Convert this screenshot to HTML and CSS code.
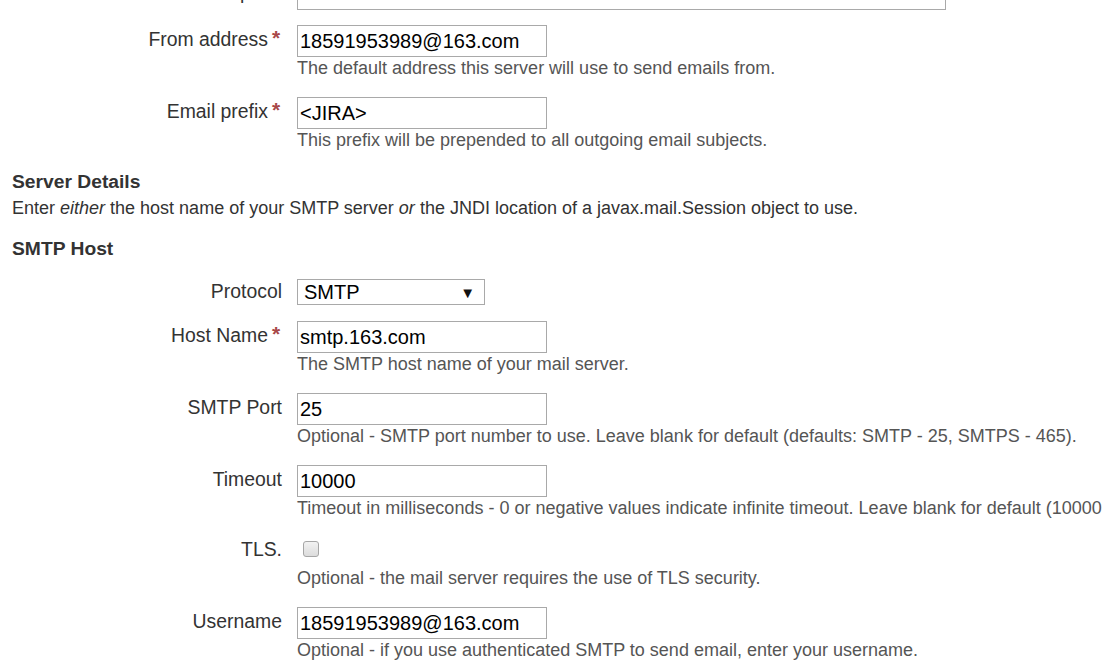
FILE: index.html
```html
<!DOCTYPE html>
<html>
<head>
<meta charset="utf-8">
<link rel="stylesheet" href="styles.css">
</head>
<body>
<div class="page">
  <div class="field tight">
    <label class="lbl">Description</label>
    <div class="ctrl"><input class="text long" type="text" value=""></div>
  </div>

  <div class="field">
    <label class="lbl">From address<span class="req">*</span></label>
    <div class="ctrl">
      <input class="text" type="text" value="18591953989@163.com">
      <div class="desc">The default address this server will use to send emails from.</div>
    </div>
  </div>

  <div class="field">
    <label class="lbl">Email prefix<span class="req">*</span></label>
    <div class="ctrl">
      <input class="text" type="text" value="<JIRA>">
      <div class="desc">This prefix will be prepended to all outgoing email subjects.</div>
    </div>
  </div>

  <h3 class="section">Server Details</h3>
  <p class="intro">Enter <em>either</em> the host name of your SMTP server <em>or</em> the JNDI location of a javax.mail.Session object to use.</p>

  <h3 class="section sub">SMTP Host</h3>

  <div class="field select-row">
    <label class="lbl">Protocol</label>
    <div class="ctrl">
      <div class="select"><span>SMTP</span><span class="arrow">&#9660;</span></div>
    </div>
  </div>

  <div class="field">
    <label class="lbl">Host Name<span class="req">*</span></label>
    <div class="ctrl">
      <input class="text" type="text" value="smtp.163.com">
      <div class="desc">The SMTP host name of your mail server.</div>
    </div>
  </div>

  <div class="field">
    <label class="lbl">SMTP Port</label>
    <div class="ctrl">
      <input class="text" type="text" value="25">
      <div class="desc">Optional - SMTP port number to use. Leave blank for default (defaults: SMTP - 25, SMTPS - 465).</div>
    </div>
  </div>

  <div class="field">
    <label class="lbl">Timeout</label>
    <div class="ctrl">
      <input class="text" type="text" value="10000">
      <div class="desc">Timeout in milliseconds - 0 or negative values indicate infinite timeout. Leave blank for default (10000</div>
    </div>
  </div>

  <div class="field check-row">
    <label class="lbl">TLS.</label>
    <div class="ctrl">
      <div class="checkline"><span class="checkbox"></span></div>
      <div class="desc">Optional - the mail server requires the use of TLS security.</div>
    </div>
  </div>

  <div class="field">
    <label class="lbl">Username</label>
    <div class="ctrl">
      <input class="text" type="text" value="18591953989@163.com">
      <div class="desc">Optional - if you use authenticated SMTP to send email, enter your username.</div>
    </div>
  </div>
</div>
</body>
</html>
```

FILE: styles.css
```css
html, body {
  margin: 0;
  padding: 0;
  background: #ffffff;
  overflow: hidden;
}

body {
  font-family: Arial, "Liberation Sans", sans-serif;
  color: #333333;
}

.page {
  margin-top: -22px;
  display: flex;
  flex-direction: column;
}

.field {
  display: grid;
  grid-template-columns: 282px 1fr;
  column-gap: 15px;
  margin-bottom: 18px;
}

.field.tight {
  margin-bottom: 15px;
}

.lbl {
  text-align: right;
  font-size: 19.4px;
  line-height: 28px;
  color: #333333;
  white-space: nowrap;
}

.req {
  display: inline-block;
  width: 16px;
  text-align: left;
  padding-left: 4px;
  box-sizing: border-box;
  margin-right: -2px;
  color: #a84848;
  font-size: 21px;
  font-weight: bold;
  line-height: 20px;
  vertical-align: 1px;
}

.ctrl {
  display: flex;
  flex-direction: column;
  align-items: flex-start;
  min-width: 0;
}

.text {
  box-sizing: border-box;
  width: 250px;
  height: 32px;
  margin: 0;
  padding: 0 2px;
  border: 1px solid #a9a9a9;
  border-radius: 0;
  font-family: Arial, "Liberation Sans", sans-serif;
  font-size: 20px;
  color: #000000;
  background: #ffffff;
  outline: none;
}

.text.long {
  width: 649px;
}

.desc {
  font-size: 18px;
  line-height: 22px;
  color: #555555;
  white-space: nowrap;
}

.section {
  margin: 0;
  padding-left: 12px;
  font-size: 19.25px;
  line-height: 26px;
  font-weight: bold;
  color: #333333;
}

.section.sub {
  margin-top: 15px;
  margin-bottom: 17px;
}

.intro {
  margin: 0;
  padding-left: 12px;
  font-size: 18px;
  line-height: 26px;
  color: #333333;
}

.select-row {
  margin-bottom: 16px;
}

.select-row .lbl {
  line-height: 25px;
}

.select {
  box-sizing: border-box;
  width: 188px;
  height: 26px;
  border: 1px solid #a9a9a9;
  display: flex;
  align-items: center;
  justify-content: space-between;
  padding: 0 9px 0 6px;
  font-size: 20px;
  color: #000000;
}

.select .arrow {
  font-size: 15px;
  color: #111111;
}

.check-row .lbl {
  line-height: 25px;
}

.checkline {
  height: 30px;
  display: flex;
  align-items: flex-start;
  padding-left: 6px;
}

.checkbox {
  box-sizing: border-box;
  width: 16px;
  height: 16px;
  margin-top: 4px;
  border: 1px solid #a6a6a6;
  border-radius: 3px;
  background: linear-gradient(#f2f2f2, #dcdcdc);
}
```
